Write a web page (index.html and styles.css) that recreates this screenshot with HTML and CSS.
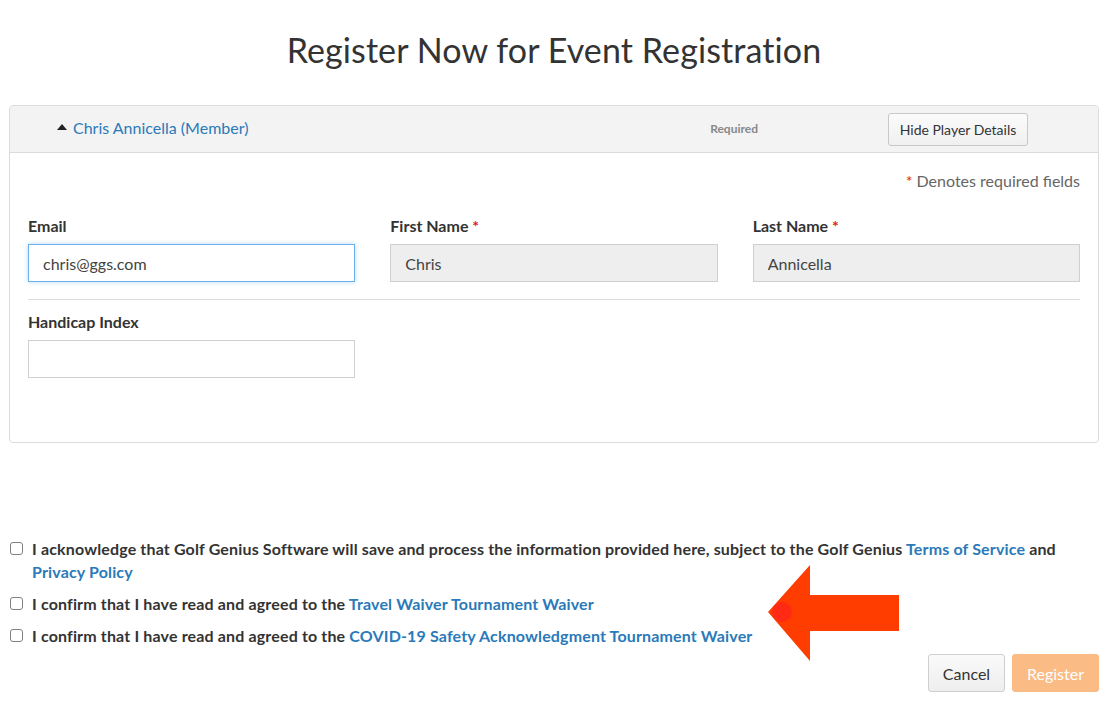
FILE: index.html
```html
<!DOCTYPE html>
<html lang="en">

<head>
  <meta charset="UTF-8" />
  <meta name="viewport" content="width=device-width, initial-scale=1.0"/>
  <title>Register Now for Event Registration</title>
  <link rel="stylesheet" href="styles.css">
</head>

<body>
  <div class="page">
    <h1 class="title">Register Now for Event Registration</h1>

    <div class="player-panel">
      <div class="panel-head">
        <a class="player-name" href="#"><span class="caret"></span>Chris Annicella (Member)</a>
        <span class="required-tag">Required</span>
        <button class="btn btn-details">Hide Player Details</button>
      </div>

      <div class="panel-body">
        <p class="req-note"><span class="star">*</span> Denotes required fields</p>

        <div class="field-row">
          <div class="field">
            <label class="field-label">Email</label>
            <input class="input input-focus" type="text" value="chris@ggs.com">
          </div>
          <div class="field">
            <label class="field-label">First Name <span class="star">*</span></label>
            <input class="input input-locked" type="text" value="Chris" readonly>
          </div>
          <div class="field">
            <label class="field-label">Last Name <span class="star">*</span></label>
            <input class="input input-locked" type="text" value="Annicella" readonly>
          </div>
        </div>

        <div class="field-row second">
          <div class="field">
            <label class="field-label">Handicap Index</label>
            <input class="input" type="text">
          </div>
        </div>
      </div>
    </div>

    <div class="agreements">
      <label class="agree">
        <span class="box"></span>
        <span class="agree-text">I acknowledge that Golf Genius Software will save and process the information provided here, subject to the Golf Genius <a href="#">Terms of Service</a> and <a href="#">Privacy Policy</a></span>
      </label>
      <label class="agree">
        <span class="box"></span>
        <span class="agree-text">I confirm that I have read and agreed to the <a href="#">Travel Waiver Tournament Waiver</a></span>
      </label>
      <label class="agree">
        <span class="box"></span>
        <span class="agree-text">I confirm that I have read and agreed to the <a href="#">COVID-19 Safety Acknowledgment Tournament Waiver</a></span>
      </label>

      <svg class="arrow" width="134" height="98" viewBox="0 0 134 98">
        <polygon points="0,47 42,0 42,30 131,30 131,66 42,66 42,96" fill="#ff3d00"/>
        <circle cx="14" cy="47" r="10" fill="#ff2a14"/>
      </svg>
    </div>

    <div class="actions">
      <button class="btn btn-cancel">Cancel</button>
      <button class="btn btn-register" disabled>Register</button>
    </div>
  </div>
</body>

</html>
```

FILE: styles.css
```css
* {
  margin: 0;
  padding: 0;
  box-sizing: border-box;
}

body {
  font-family: Lato, 'Open Sans', Arial, sans-serif;
  color: #333;
  background: #fff;
}

a {
  color: #2a7ab9;
  text-decoration: none;
}

.page {
  width: 1090px;
  margin-left: 9px;
}

.title {
  font-size: 34px;
  font-weight: 400;
  text-align: center;
  color: #333;
  padding-top: 29px;
  height: 105px;
  letter-spacing: 0.1px;
}

.player-panel {
  border: 1px solid #dcdcdc;
  border-radius: 4px;
  height: 338px;
}

.panel-head {
  height: 47px;
  background: #f3f3f3;
  border-bottom: 1px solid #dcdcdc;
  border-radius: 4px 4px 0 0;
  display: flex;
  align-items: center;
  padding-left: 47px;
}

.player-name {
  font-size: 16px;
  flex: 1;
  display: flex;
  align-items: center;
  margin-top: -3px;
}

.caret {
  width: 0;
  height: 0;
  border-left: 5px solid transparent;
  border-right: 5px solid transparent;
  border-bottom: 6px solid #222;
  margin-right: 6px;
  margin-top: -1px;
}

.required-tag {
  font-size: 12px;
  font-weight: 700;
  color: #888;
  margin-right: 130px;
  margin-top: -1px;
}

.btn {
  font-family: inherit;
  font-size: 14px;
  border-radius: 3px;
  cursor: pointer;
}

.btn-details {
  width: 140px;
  height: 33px;
  margin-right: 70px;
  border: 1px solid #c8c8c8;
  background: linear-gradient(#fbfbfb, #f0f0f0);
  color: #333;
}

.panel-body {
  padding: 0 18px;
}

.req-note {
  text-align: right;
  font-size: 16px;
  color: #666;
  padding-top: 18px;
  height: 62px;
}

.star {
  color: #e02020;
}

.field-row {
  display: grid;
  grid-template-columns: 1fr 1fr 1fr;
  gap: 35px;
  padding-bottom: 17px;
  border-bottom: 1px solid #dcdcdc;
}

.field-row.second {
  border-bottom: none;
  padding-top: 11px;
}

.field-label {
  display: block;
  font-size: 16px;
  font-weight: 700;
  color: #333;
  height: 21px;
  padding-top: 1px;
  margin-bottom: 8px;
}

.input {
  width: 100%;
  height: 38px;
  border: 1px solid #d0d0d0;
  font-family: inherit;
  font-size: 16px;
  color: #444;
  padding: 0 14px;
  outline: none;
  background: #fff;
}

.input-focus {
  border-color: #6ab0ef;
  box-shadow: 0 0 5px rgba(102, 175, 233, 0.45);
}

.input-locked {
  background: #eeeeee;
  border-color: #cfcfcf;
}

.agreements {
  position: relative;
  margin-top: 94px;
  margin-left: 1px;
}

.agree {
  display: flex;
  align-items: flex-start;
  font-size: 16px;
  font-weight: 700;
  letter-spacing: 0.15px;
  line-height: 23px;
  color: #333;
  margin-bottom: 9px;
}

.agree a {
  color: #2a7ab9;
}

.box {
  flex: none;
  width: 13px;
  height: 13px;
  border: 1px solid #808080;
  border-radius: 3px;
  margin-top: 5px;
  margin-right: 9px;
  background: #fff;
}

.agree-text {
  width: 1045px;
}

.arrow {
  position: absolute;
  left: 758px;
  top: 28px;
}

.actions {
  display: flex;
  justify-content: flex-end;
  gap: 7px;
  margin-top: -2px;
}

.btn-cancel {
  width: 77px;
  height: 38px;
  border: 1px solid #cfcfcf;
  background: linear-gradient(#fafafa, #eeeeee);
  color: #333;
  font-size: 16px;
}

.btn-register {
  width: 87px;
  height: 38px;
  border: 1px solid #fbbb84;
  background: #fbbb84;
  color: #fff;
  font-size: 16px;
}
```
